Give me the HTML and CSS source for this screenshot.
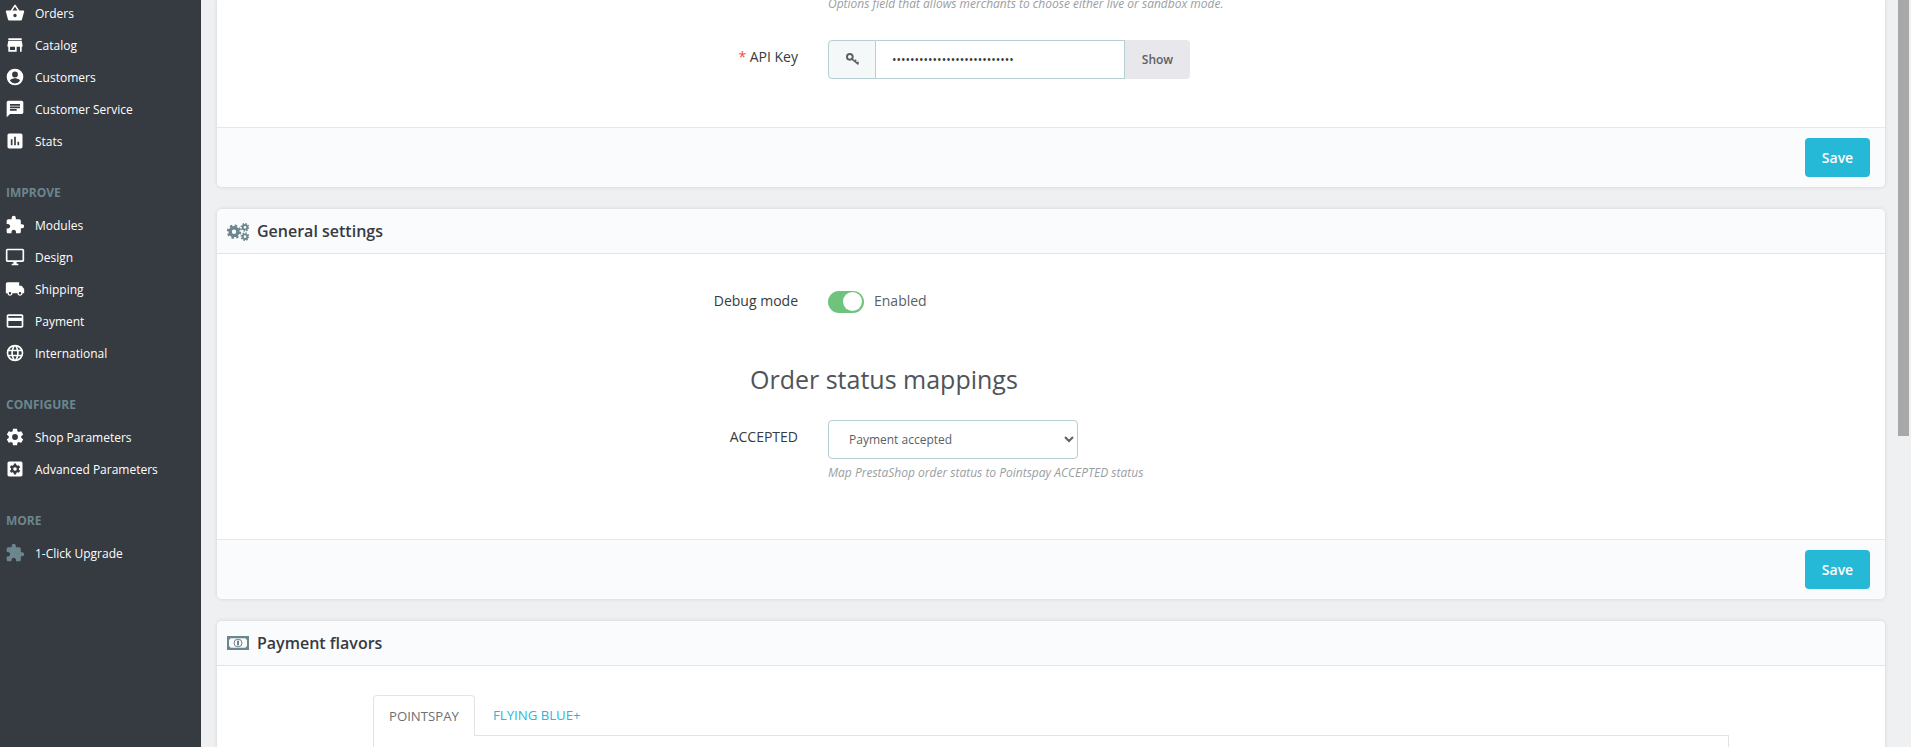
FILE: index.html
```html
<!DOCTYPE html>
<html lang="en">
<head>
    <meta charset="UTF-8">
    <meta name="viewport" content="width=device-width, initial-scale=1.0">
    <title>Pointspay configuration</title>
    <link rel="stylesheet" href="styles.css">
</head>
<body>

    <nav class="sidebar">
        <a class="nav-item nav-first"><svg viewBox="0 0 24 24"><path d="M17.2 9l-4.4-6.6c-.2-.3-.5-.4-.8-.4s-.6.1-.8.4L6.8 9H2c-.6 0-1 .4-1 1v.3l2.500 9.200c.2.9 1 1.500 1.900 1.500h13.200c.9 0 1.700-.6 1.900-1.500L23 10.300V10c0-.6-.4-1-1-1h-4.800zM9 9l3-4.400L15 9H9zm3 8c-1.100 0-2-.9-2-2s.9-2 2-2 2 .9 2 2-.9 2-2 2z"/></svg>Orders</a>
        <a class="nav-item"><svg viewBox="0 0 24 24"><path d="M20 4H4v2h16V4zm1 10v-2l-1-5H4l-1 5v2h1v6h10v-6h4v6h2v-6h1zm-9 4H6v-4h6v4z"/></svg>Catalog</a>
        <a class="nav-item"><svg viewBox="0 0 24 24"><path d="M12 2a10 10 0 1 0 0 20 10 10 0 0 0 0-20zm0 3.500a3.500 3.500 0 1 1 0 7 3.500 3.500 0 0 1 0-7zm0 14.300a7.400 7.400 0 0 1-6-3.200c.03-2 4-3.100 6-3.100s5.970 1.100 6 3.100a7.400 7.400 0 0 1-6 3.200z"/></svg>Customers</a>
        <a class="nav-item"><svg viewBox="0 0 24 24"><path d="M20 2H4c-1.100 0-2 .9-2 2v18l4-4h14c1.100 0 2-.9 2-2V4c0-1.100-.9-2-2-2zM6 9h12v2H6V9zm8 5H6v-2h8v2zm4-6H6V6h12v2z"/></svg>Customer Service</a>
        <a class="nav-item"><svg viewBox="0 0 24 24"><path d="M19 3H5c-1.100 0-2 .9-2 2v14c0 1.100.9 2 2 2h14c1.100 0 2-.9 2-2V5c0-1.100-.9-2-2-2zM9 17H7v-7h2v7zm4 0h-2V7h2v10zm4 0h-2v-4h2v4z"/></svg>Stats</a>

        <h4 class="nav-title">IMPROVE</h4>
        <a class="nav-item"><svg viewBox="0 0 24 24"><path d="M20.500 11H19V7c0-1.100-.9-2-2-2h-4V3.500a2.500 2.500 0 0 0-5 0V5H4c-1.100 0-2 .9-2 2v3.800h1.500c1.500 0 2.700 1.200 2.700 2.700s-1.200 2.700-2.700 2.700H2V20c0 1.100.9 2 2 2h3.800v-1.500c0-1.500 1.200-2.700 2.700-2.700s2.700 1.200 2.700 2.700V22H17c1.100 0 2-.9 2-2v-4h1.500a2.500 2.500 0 0 0 0-5z"/></svg>Modules</a>
        <a class="nav-item"><svg viewBox="0 0 24 24"><path d="M21 2H3c-1.100 0-2 .9-2 2v12c0 1.100.9 2 2 2h7v2H8v2h8v-2h-2v-2h7c1.100 0 2-.9 2-2V4c0-1.100-.9-2-2-2zm0 14H3V4h18v12z"/></svg>Design</a>
        <a class="nav-item"><svg viewBox="0 0 24 24"><path d="M20 8h-3V4H3c-1.100 0-2 .9-2 2v11h2c0 1.660 1.340 3 3 3s3-1.340 3-3h6c0 1.660 1.340 3 3 3s3-1.340 3-3h2v-5l-3-4zM6 18.500a1.500 1.500 0 1 1 0-3 1.500 1.500 0 0 1 0 3zm12 0a1.500 1.500 0 1 1 0-3 1.500 1.500 0 0 1 0 3z"/></svg>Shipping</a>
        <a class="nav-item"><svg viewBox="0 0 24 24"><path d="M20 4H4c-1.110 0-2 .89-2 2v12c0 1.110.89 2 2 2h16c1.110 0 2-.89 2-2V6c0-1.110-.89-2-2-2zm0 14H4v-6h16v6zm0-10H4V6h16v2z"/></svg>Payment</a>
        <a class="nav-item"><svg viewBox="0 0 24 24"><path d="M12 2a10 10 0 1 0 0 20 10 10 0 0 0 0-20zm6.900 6h-2.950a15.600 15.600 0 0 0-1.380-3.560A8 8 0 0 1 18.900 8zM12 4.040c.83 1.200 1.480 2.530 1.910 3.960h-3.820c.43-1.430 1.080-2.760 1.910-3.960zM4.260 14a8.200 8.200 0 0 1 0-4h3.380a16.500 16.500 0 0 0 0 4H4.260zm.82 2h2.950c.32 1.250.78 2.450 1.380 3.560A8 8 0 0 1 5.080 16zm2.950-8H5.080a8 8 0 0 1 4.330-3.560A15.600 15.600 0 0 0 8.030 8zM12 19.960c-.83-1.200-1.480-2.530-1.910-3.960h3.820c-.43 1.430-1.080 2.760-1.910 3.960zM14.340 14H9.660a14.700 14.700 0 0 1 0-4h4.680a14.700 14.700 0 0 1 0 4zm.25 5.560c.6-1.110 1.060-2.310 1.380-3.560h2.950a8 8 0 0 1-4.330 3.560zM16.360 14a16.500 16.500 0 0 0 0-4h3.380a8.200 8.200 0 0 1 0 4h-3.380z"/></svg>International</a>

        <h4 class="nav-title">CONFIGURE</h4>
        <a class="nav-item"><svg viewBox="0 0 24 24"><path d="M19.430 12.980a7.800 7.800 0 0 0 0-1.960l2.110-1.650a.5.500 0 0 0 .12-.64l-2-3.460a.5.500 0 0 0-.61-.22l-2.490 1a7.300 7.300 0 0 0-1.690-.98l-.38-2.650A.49.490 0 0 0 14 2h-4a.49.490 0 0 0-.49.420l-.38 2.650a7.700 7.700 0 0 0-1.690.98l-2.490-1a.5.500 0 0 0-.61.220l-2 3.460a.49.490 0 0 0 .12.640l2.110 1.650a7.900 7.900 0 0 0 0 1.960l-2.110 1.650a.5.500 0 0 0-.12.640l2 3.460c.12.220.39.300.61.220l2.490-1c.52.400 1.080.73 1.690.98l.38 2.650c.03.240.24.420.49.420h4c.25 0 .46-.18.49-.42l.38-2.650a7.700 7.700 0 0 0 1.690-.98l2.490 1c.23.090.49 0 .61-.22l2-3.460a.5.500 0 0 0-.12-.64l-2.110-1.650zM12 15.500a3.500 3.500 0 1 1 0-7 3.500 3.500 0 0 1 0 7z"/></svg>Shop Parameters</a>
        <a class="nav-item"><svg viewBox="0 0 24 24"><path fill-rule="evenodd" d="M5 3h14c1.100 0 2 .9 2 2v14c0 1.100-.9 2-2 2H5c-1.100 0-2-.9-2-2V5c0-1.100.9-2 2-2zm11.700 9.800a5 5 0 0 0 0-1.600l1.500-1.200-1.500-2.600-1.800.7a5.500 5.500 0 0 0-1.300-.8L13.300 5.400h-2.600l-.3 1.900a5.500 5.500 0 0 0-1.300.8l-1.800-.7L5.800 10l1.500 1.200a5 5 0 0 0 0 1.600L5.800 14l1.500 2.600 1.800-.7c.4.300.9.600 1.300.8l.3 1.900h2.600l.3-1.900c.4-.2.900-.5 1.300-.8l1.800.7 1.500-2.600-1.500-1.200zM12 14.200a2.200 2.200 0 1 1 0-4.400 2.200 2.200 0 0 1 0 4.400z"/></svg>Advanced Parameters</a>

        <h4 class="nav-title">MORE</h4>
        <a class="nav-item nav-muted"><svg viewBox="0 0 24 24"><path d="M20.500 11H19V7c0-1.100-.9-2-2-2h-4V3.500a2.500 2.500 0 0 0-5 0V5H4c-1.100 0-2 .9-2 2v3.800h1.500c1.500 0 2.700 1.200 2.700 2.700s-1.200 2.700-2.700 2.700H2V20c0 1.100.9 2 2 2h3.800v-1.500c0-1.500 1.200-2.700 2.700-2.700s2.700 1.200 2.700 2.700V22H17c1.100 0 2-.9 2-2v-4h1.500a2.500 2.500 0 0 0 0-5z"/></svg><span>1-Click Upgrade</span></a>
    </nav>

    <main class="content">
        <section class="card card-top">
            <div class="card-body body-api">
                <p class="help help-top">Options field that allows merchants to choose either live or sandbox mode.</p>
                <div class="row row-api">
                    <label class="row-label"><span class="required">*</span> API Key</label>
                    <div class="input-group">
                        <span class="input-addon">
                            <svg viewBox="0 0 14 14"><circle class="key-ring" cx="4.500" cy="4.500" r="2.700"/><path class="key-stem" d="M6.600 6.600l6 5M9 8.600l1.500-1.400M11.300 10.500l1.300-1.200"/></svg>
                        </span>
                        <input class="input-key" type="text" value="•••••••••••••••••••••••••••" readonly>
                        <button class="btn-show" type="button">Show</button>
                    </div>
                </div>
            </div>
            <div class="card-footer"><button class="btn-save" type="button">Save</button></div>
        </section>

        <section class="card">
            <div class="card-header">
                <svg class="head-icon gears" viewBox="0 0 22 22">
                    <circle class="gear-body" cx="7" cy="11.700" r="3.900"/>
                    <circle class="gear-teeth" cx="7" cy="11.700" r="6.200"/>
                    <circle class="cog-body" cx="18" cy="7.300" r="2.300"/>
                    <circle class="cog-teeth" cx="18" cy="7.300" r="3.700"/>
                    <circle class="cog-body" cx="18" cy="16.700" r="2.300"/>
                    <circle class="cog-teeth" cx="18" cy="16.700" r="3.700"/>
                </svg>
                General settings
            </div>
            <div class="card-body body-general">
                <div class="row row-debug">
                    <label class="row-label">Debug mode</label>
                    <div class="switch-wrap">
                        <span class="switch"><span class="switch-knob"></span></span>
                        <span class="switch-text">Enabled</span>
                    </div>
                </div>
                <h3 class="mapping-title">Order status mappings</h3>
                <div class="row row-select">
                    <label class="row-label">ACCEPTED</label>
                    <div>
                        <select class="status-select">
                            <option>Payment accepted</option>
                        </select>
                        <p class="help">Map PrestaShop order status to Pointspay ACCEPTED status</p>
                    </div>
                </div>
            </div>
            <div class="card-footer"><button class="btn-save" type="button">Save</button></div>
        </section>

        <section class="card card-flavors">
            <div class="card-header">
                <svg class="head-icon" viewBox="0 0 22 22">
                    <path fill-rule="evenodd" d="M0 4h22v14H0V4zm3.500 2.200A2 2 0 0 1 2 7.700v6.600a2 2 0 0 1 1.500 1.500h15a2 2 0 0 1 1.500-1.500V7.700a2 2 0 0 1-1.500-1.500h-15z"/>
                    <ellipse class="bill-oval" cx="11" cy="11" rx="4" ry="3.800"/>
                    <rect x="10" y="8.700" width="2" height="4.600"/>
                </svg>
                Payment flavors
            </div>
            <div class="card-body body-flavors">
                <div class="tabs">
                    <a class="tab tab-active">POINTSPAY</a>
                    <a class="tab tab-next">FLYING BLUE+</a>
                </div>
                <div class="tab-pane"></div>
            </div>
        </section>
    </main>

    <div class="scroll-thumb"></div>

</body>
</html>
```
FILE: styles.css
```css
body {
    margin: 0;
    height: 747px;
    overflow: hidden;
    display: flex;
    background: #eff0f2;
    font-family: "Open Sans", sans-serif;
    font-size: 14px;
    color: #363a41;
}
.sidebar {
    width: 201px;
    flex: none;
    background: #363a41;
}
.nav-item {
    display: flex;
    align-items: center;
    height: 32px;
    padding-left: 5px;
    color: #fff;
    font-size: 12px;
}
.nav-first {
    margin-top: -3px;
}
.nav-item svg {
    width: 20px;
    height: 20px;
    margin-right: 10px;
    fill: #fff;
}
.nav-muted svg {
    fill: #6c868e;
}
.nav-title {
    margin: 24px 0 4px;
    height: 24px;
    line-height: 24px;
    padding-left: 6px;
    color: #6c868e;
    font-size: 12px;
    font-weight: 700;
}
.content {
    width: 1668px;
    flex: none;
    margin-left: 16px;
}
.card {
    background: #fff;
    border-radius: 5px;
    box-shadow: 0 0 4px rgba(0, 0, 0, 0.12);
    margin-bottom: 22px;
}
.card-top {
    border-radius: 0 0 5px 5px;
}
.card-flavors {
    margin-bottom: 0;
    border-radius: 5px 5px 0 0;
}
.card-header {
    display: flex;
    align-items: center;
    height: 45px;
    box-sizing: border-box;
    padding-left: 10px;
    background: #fafbfc;
    border-bottom: 1px solid #dfe5e7;
    border-radius: 5px 5px 0 0;
    font-size: 16px;
    font-weight: 600;
}
.head-icon {
    width: 22px;
    height: 22px;
    margin-right: 8px;
    fill: #6c868e;
}
.gears circle {
    fill: none;
    stroke: #6c868e;
}
.gear-body {
    stroke-width: 3.400;
}
.gear-teeth {
    stroke-width: 2;
    stroke-dasharray: 2.430 2.430;
}
.cog-body {
    stroke-width: 1.800;
}
.cog-teeth {
    stroke-width: 1.400;
    stroke-dasharray: 1.450 1.450;
}
.bill-oval {
    fill: none;
    stroke: #6c868e;
    stroke-width: 1;
}
.card-footer {
    display: flex;
    justify-content: flex-end;
    align-items: center;
    height: 60px;
    box-sizing: border-box;
    padding-right: 15px;
    background: #fafbfc;
    border-top: 1px solid #e6e9eb;
    border-radius: 0 0 5px 5px;
}
.btn-save {
    width: 65px;
    height: 39px;
    background: #25b9d7;
    border: 0;
    border-radius: 4px;
    color: #fff;
    font-family: inherit;
    font-size: 14px;
    font-weight: 600;
}
.body-api {
    display: flow-root;
    height: 127px;
}
.body-general {
    display: flow-root;
    height: 285px;
}
.body-flavors {
    padding: 29px 0 0 156px;
}
.row {
    display: flex;
}
.row-label {
    width: 581px;
    flex: none;
    margin-right: 30px;
    line-height: 21px;
    text-align: right;
}
.help {
    margin: 5px 0 0;
    font-size: 12px;
    line-height: 17px;
    font-style: italic;
    color: #9a9ea2;
}
.help-top {
    margin: -5px 0 0 611px;
}
.row-api {
    margin-top: 28px;
}
.row-api .row-label {
    padding-top: 6px;
}
.required {
    color: #f54c3e;
}
.input-group {
    display: flex;
    height: 39px;
}
.input-addon {
    display: flex;
    align-items: center;
    justify-content: center;
    width: 48px;
    box-sizing: border-box;
    background: #f5f8f9;
    border: 1px solid #b7ced3;
    border-radius: 4px 0 0 4px;
}
.input-addon svg {
    width: 15px;
    height: 15px;
}
.key-ring,
.key-stem {
    fill: none;
    stroke: #5c5f64;
    stroke-width: 1.800;
}
.key-stem {
    stroke-width: 1.500;
}
.input-key {
    width: 249px;
    margin: 0;
    padding: 0 16px;
    box-sizing: border-box;
    border: 1px solid #b7ced3;
    border-left: 0;
    font-family: inherit;
    font-size: 12px;
    color: #363a41;
    outline: none;
}
.btn-show {
    width: 65px;
    border: 0;
    background: #e7e7ec;
    border-radius: 0 4px 4px 0;
    color: #5c5f64;
    font-family: inherit;
    font-size: 12px;
    font-weight: 600;
}
.row-debug {
    margin-top: 36px;
    align-items: center;
}
.row-debug .row-label,
.switch-text {
    padding-bottom: 2px;
}
.switch-wrap {
    display: flex;
    align-items: center;
}
.switch {
    display: flex;
    justify-content: flex-end;
    align-items: center;
    width: 36px;
    height: 22px;
    padding-right: 2px;
    box-sizing: border-box;
    background: #70c37c;
    border-radius: 11px;
}
.switch-knob {
    width: 19px;
    height: 19px;
    background: #fff;
    border-radius: 50%;
}
.switch-text {
    margin-left: 10px;
    color: #5c5f64;
}
.mapping-title {
    margin: 48px 0 0 533px;
    font-size: 25px;
    line-height: 36px;
    font-weight: 400;
    color: #505458;
}
.row-select {
    margin-top: 23px;
}
.row-select .row-label {
    padding-top: 6px;
}
.status-select {
    display: block;
    width: 250px;
    height: 39px;
    padding-left: 16px;
    background: #fff;
    border: 1px solid #b7ced3;
    border-radius: 4px;
    font-family: inherit;
    font-size: 12px;
    color: #5c5f64;
}
.tabs {
    display: flex;
}
.tab {
    padding: 0 15px;
    height: 40px;
    line-height: 40px;
    color: #25b9d7;
    font-size: 13.200px;
}
.tab-active {
    color: #6c6f74;
    background: #fff;
    border: 1px solid #dfe5e7;
    border-bottom: 0;
    border-radius: 4px 4px 0 0;
    position: relative;
    z-index: 1;
}
.tab-next {
    margin-left: 3px;
}
.tab-pane {
    width: 1354px;
    height: 12px;
    box-sizing: content-box;
    margin-top: -1px;
    padding-top: 1px;
    border: 1px solid #dfe5e7;
    border-bottom: 0;
}
.scroll-thumb {
    position: absolute;
    top: 0;
    right: 2px;
    width: 11px;
    height: 436px;
    background: #a8a8a8;
}
```
